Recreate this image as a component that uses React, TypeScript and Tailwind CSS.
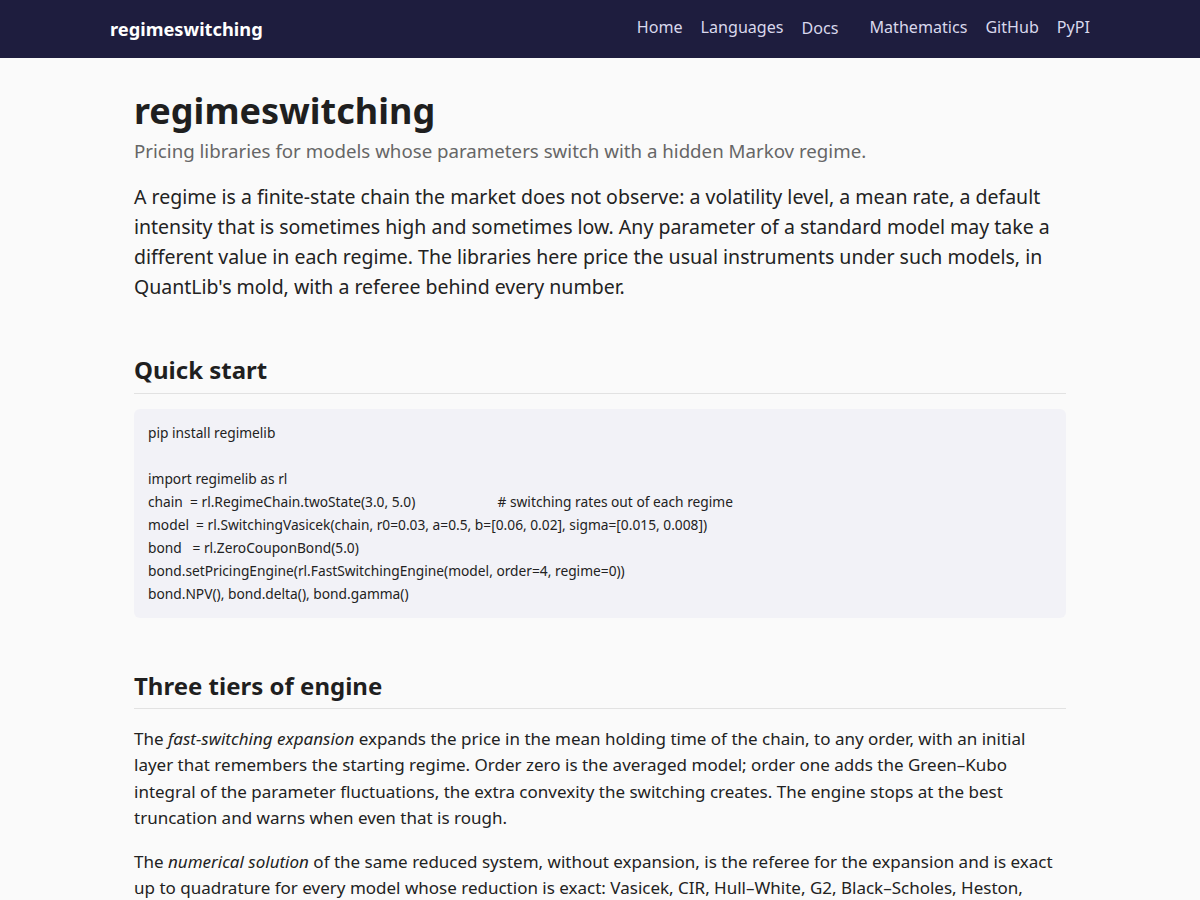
import React from "react";

const navLinks = ["Home", "Languages", "Docs", "Mathematics", "GitHub", "PyPI"];

const code = `pip install regimelib

import regimelib as rl
chain  = rl.RegimeChain.twoState(3.0, 5.0)                       # switching rates out of each regime
model  = rl.SwitchingVasicek(chain, r0=0.03, a=0.5, b=[0.06, 0.02], sigma=[0.015, 0.008])
bond   = rl.ZeroCouponBond(5.0)
bond.setPricingEngine(rl.FastSwitchingEngine(model, order=4, regime=0))
bond.NPV(), bond.delta(), bond.gamma()`;

export default function App() {
  return (
    <div className="min-h-screen bg-[#fafafa] text-[#222] font-['Noto_Sans',sans-serif]">
      <header className="h-[58px] bg-[#1e1d3e]">
        <div className="mx-auto flex h-full w-[980px] items-center justify-between pb-[3px]">
          <a href="#" className="translate-y-px text-[18.25px] font-bold text-white">
            regimeswitching
          </a>
          <nav className="flex items-center gap-[18px] text-[16.1px] text-[#d9d8ec]">
            {navLinks.map((l) => (
              <a
                key={l}
                href="#"
                className={l === "Docs" ? "mr-[13px] translate-y-px" : ""}
              >
                {l}
              </a>
            ))}
          </nav>
        </div>
      </header>

      <main className="mx-auto w-[932px] pt-[29px] pb-10">
        <h1 className="text-[36px] font-bold leading-[48px] text-[#1f1f1f]">
          regimeswitching
        </h1>
        <p className="mt-[3px] text-[18.7px] leading-[26px] text-[#666]">
          Pricing libraries for models whose parameters switch with a hidden Markov regime.
        </p>
        <p className="mt-[18px] text-[19.5px] leading-[30px] text-[#222]">
          A regime is a finite-state chain the market does not observe: a volatility level, a
          mean rate, a default intensity that is sometimes high and sometimes low. Any parameter
          of a standard model may take a different value in each regime. The libraries here price
          the usual instruments under such models, in QuantLib's mold, with a referee behind
          every number.
        </p>

        <h2 className="mt-[51px] border-b border-[#e2e2e2] pb-[6px] text-[24px] font-bold leading-[34px] text-[#1f1f1f]">
          Quick start
        </h2>
        <pre className="mt-[15px] whitespace-pre rounded-md bg-[#f2f2f7] px-[14px] pt-[12px] pb-[13px] font-['Noto_Sans',sans-serif] text-[13.75px] leading-[23px] font-stretch-condensed text-[#222]">
          {code}
        </pre>

        <h2 className="mt-[51px] border-b border-[#e2e2e2] pb-[5px] text-[24px] font-bold leading-[34px] text-[#1f1f1f]">
          Three tiers of engine
        </h2>
        <p className="mt-[17px] text-[17px] leading-[26.3px]">
          The <em>fast-switching expansion</em> expands the price in the mean holding time of the
          chain, to any order, with an initial layer that remembers the starting regime. Order zero
          is the averaged model; order one adds the Green–Kubo integral of the parameter
          fluctuations, the extra convexity the switching creates. The engine stops at the best
          truncation and warns when even that is rough.
        </p>
        <p className="mt-[18px] text-[17px] leading-[26.3px]">
          The <em>numerical solution</em> of the same reduced system, without expansion, is the
          referee for the expansion and is exact up to quadrature for every model whose reduction
          is exact: Vasicek, CIR, Hull–White, G2, Black–Scholes, Heston, Merton jump-diffusion and
          the intensity models of credit.
        </p>
      </main>
    </div>
  );
}
